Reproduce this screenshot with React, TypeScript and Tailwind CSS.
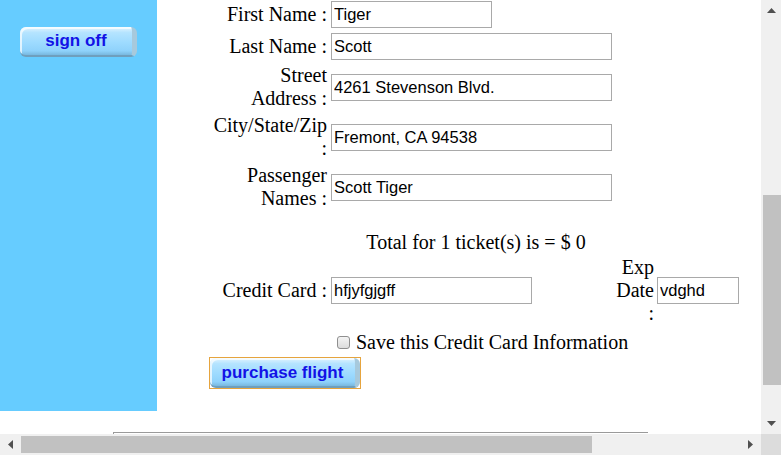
import React from 'react';

const serif = { fontFamily: '"Liberation Serif", "Times New Roman", serif' };
const sans = { fontFamily: '"Liberation Sans", Arial, sans-serif' };

const TextField = ({ value, width }: { value: string; width: string }) => (
  <input
    readOnly
    value={value}
    className={`${width} h-[27px] border border-[#a9a9a9] bg-white px-[2px] text-[16.5px] text-black outline-none`}
    style={sans}
  />
);

const BevelButton = ({ label, className }: { label: string; className: string }) => (
  <div
    className={`${className} flex items-center justify-center rounded-[6px] border-b-2 border-b-[#6f9fbd] border-r-[5px] border-r-[#a7c9dc] bg-[linear-gradient(180deg,#e4f5ff_0%,#b5e4ff_20%,#9edbff_55%,#8fd2fb_85%,#78b8df_100%)] font-bold text-[#1212e6] shadow-[inset_2px_2px_0_rgba(255,255,255,0.7)]`}
    style={sans}
  >
    {label}
  </div>
);

const Arrow = ({ dir }: { dir: 'up' | 'down' | 'left' | 'right' }) => {
  const pts = {
    up: '0,5 9,5 4.5,0',
    down: '0,0 9,0 4.5,5',
    left: '5,0 5,9 0,4.5',
    right: '0,0 0,9 5,4.5',
  }[dir];
  const vertical = dir === 'up' || dir === 'down';
  return (
    <svg width={vertical ? 9 : 5} height={vertical ? 5 : 9} viewBox={vertical ? '0 0 9 5' : '0 0 5 9'}>
      <polygon points={pts} fill="#505050" />
    </svg>
  );
};

const rows = [
  { label: ['First Name :'], value: 'Tiger', width: 'w-[161px]' },
  { label: ['Last Name :'], value: 'Scott', width: 'w-[281px]' },
  { label: ['Street', 'Address :'], value: '4261 Stevenson Blvd.', width: 'w-[281px]' },
  { label: ['City/State/Zip', ':'], value: 'Fremont, CA 94538', width: 'w-[281px]' },
  { label: ['Passenger', 'Names :'], value: 'Scott Tiger', width: 'w-[281px]' },
];

export default function App() {
  return (
    <div className="flex h-[455px] w-[781px] overflow-hidden bg-white">
      <div className="flex w-[761px] flex-col">
        {/* viewport */}
        <div className="h-[434px] overflow-hidden">
          <div className="flex">
            <div className="h-[411px] w-[157px] shrink-0 bg-[#66ccff] pl-[20px] pt-[27px]">
              <BevelButton label="sign off" className="h-[30px] w-[117px] text-[17px]" />
            </div>

            <div className="ml-[52px] w-[534px] text-[20px] leading-[23px] text-black" style={serif}>
              <div className="grid grid-cols-[118px_1fr] auto-rows-[minmax(28px,auto)] items-center gap-x-[4px] gap-y-[4px]">
                {rows.map((r) => (
                  <React.Fragment key={r.value}>
                    <div className="text-right">
                      {r.label.map((l) => (
                        <div key={l}>{l}</div>
                      ))}
                    </div>
                    <TextField value={r.value} width={r.width} />
                  </React.Fragment>
                ))}
              </div>

              <div className="mt-[21px] text-center">Total for 1 ticket(s) is = $ 0</div>

              <div className="mt-[2px] flex items-center">
                <div className="w-[118px] text-right">Credit Card :</div>
                <div className="ml-[4px]">
                  <TextField value="hfjyfgjgff" width="w-[201px]" />
                </div>
                <div className="ml-[82px] w-[40px] text-right">Exp Date :</div>
                <div className="ml-[3px]">
                  <TextField value="vdghd" width="w-[82px]" />
                </div>
              </div>

              <div className="mt-[6px] flex items-center pl-[128px]">
                <span className="mr-[6px] h-[13px] w-[13px] rounded-[3px] border border-[#8f8f8f] bg-[linear-gradient(180deg,#f4f4f4,#dcdcdc)]" />
                <span>Save this Credit Card Information</span>
              </div>

              <div className="mt-[3px] w-[152px] border border-[#e6a43e]">
                <BevelButton label="purchase flight" className="h-[30px] w-[150px] text-[17px]" />
              </div>
            </div>
          </div>

          <div className="ml-[113px] mt-[21px] h-[3px] w-[535px] border-l border-t border-[#9a9a9a]" />
        </div>

        {/* horizontal scrollbar */}
        <div className="flex h-[21px] bg-[#f0f0f0]">
          <div className="flex w-[21px] items-center justify-center">
            <Arrow dir="left" />
          </div>
          <div className="my-[2px] w-[571px] bg-[#c1c1c1]" />
          <div className="flex-1" />
          <div className="flex w-[21px] items-center justify-center">
            <Arrow dir="right" />
          </div>
        </div>
      </div>

      {/* vertical scrollbar */}
      <div className="flex w-[20px] flex-col">
        <div className="flex h-[434px] flex-col bg-[#f0f0f0]">
          <div className="flex h-[21px] items-center justify-center">
            <Arrow dir="up" />
          </div>
          <div className="ml-[2px] mt-[174px] h-[190px] bg-[#c1c1c1]" />
          <div className="flex-1" />
          <div className="flex h-[21px] items-center justify-center">
            <Arrow dir="down" />
          </div>
        </div>
        <div className="h-[21px] bg-[#dcdcdc]" />
      </div>
    </div>
  );
}
